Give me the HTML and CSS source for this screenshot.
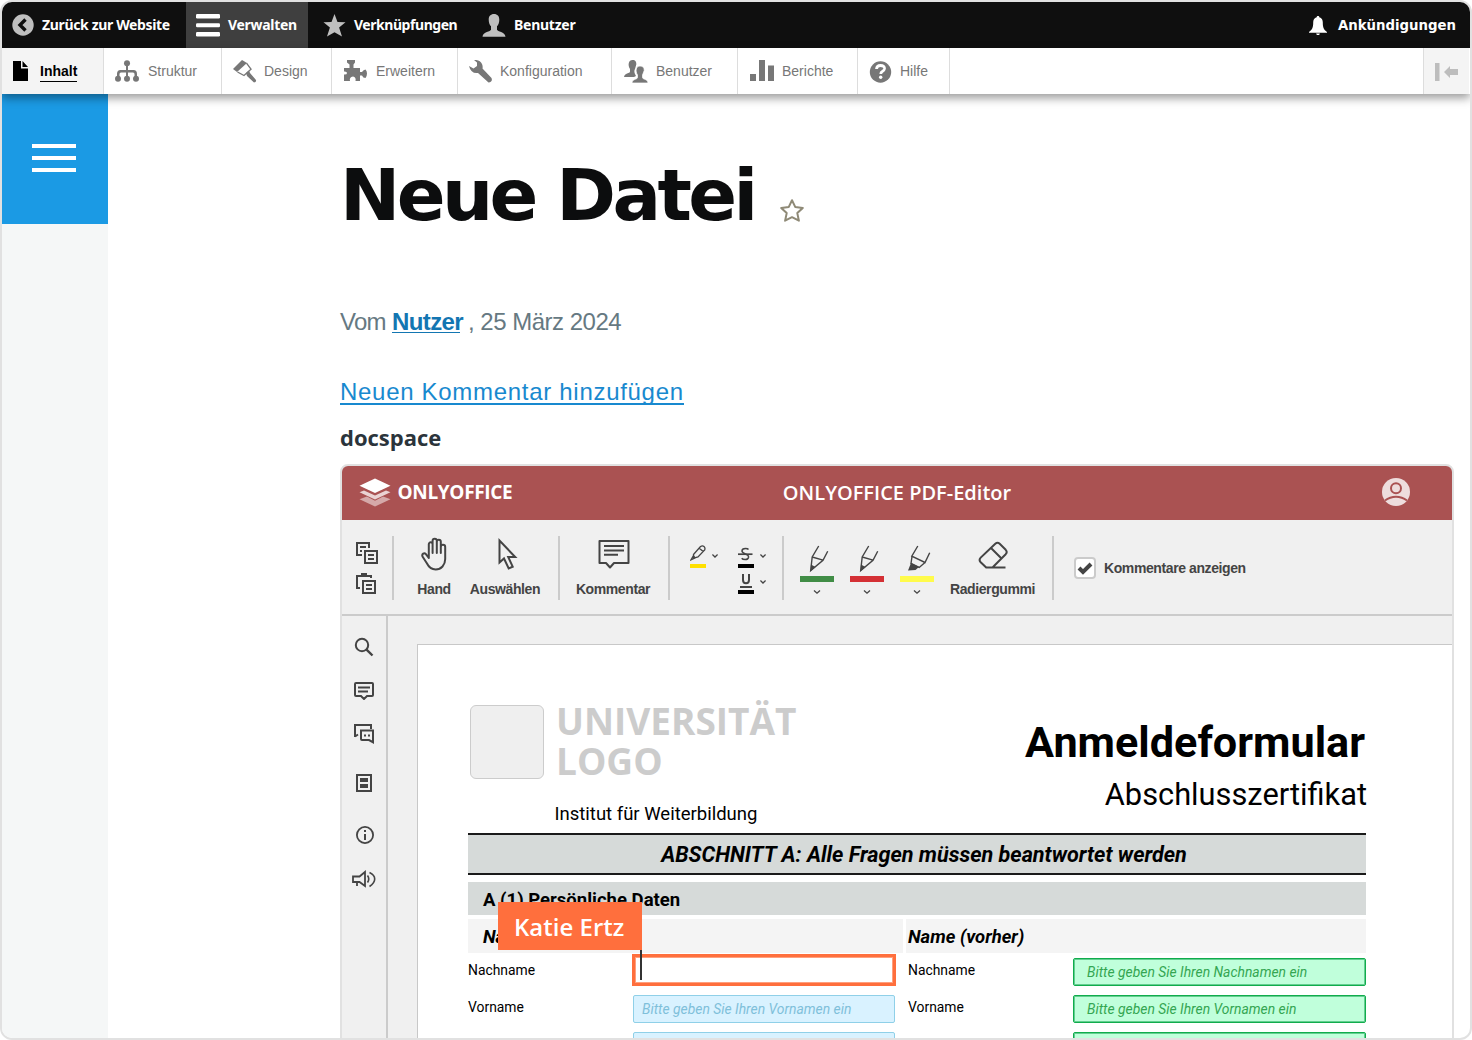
FILE: index.html
```html
<!DOCTYPE html>
<html lang="de">
<head>
<meta charset="utf-8">
<title>Neue Datei</title>
<link rel="stylesheet" href="styles.css">
</head>
<body>
<div class="frame">
  <nav class="admin">
    <a class="admin-item admin-back"><svg class="ico-back" width="22" height="22" viewBox="0 0 22 22"><circle cx="11" cy="11" r="10.700" fill="#bfbfbf"/><path d="M13.500 5.500L8 11l5.500 5.500" fill="none" stroke="#0f0f0f" stroke-width="3.400"/></svg><span class="t-back">Zurück zur Website</span></a>
    <a class="admin-item admin-manage"><svg width="24" height="23" viewBox="0 0 24 23" fill="#fff"><rect width="24" height="4.500" rx="1.200"/><rect y="9.300" width="24" height="4" rx="1.200"/><rect y="18" width="24" height="4.500" rx="1.200"/></svg><span class="t-manage">Verwalten</span></a>
    <a class="admin-item admin-star"><svg width="24" height="23" viewBox="0 0 24 23"><path d="M12.500 0l3 8 8 .2-6.400 5.200 2.900 9.100-7.500-4.200L5 22.500l2.900-9.100L1.500 8.200l8-.2z" fill="#bfbfbf"/></svg><span class="t-star">Verknüpfungen</span></a>
    <a class="admin-item admin-user"><svg width="24" height="23" viewBox="0 0 24 23"><path d="M12 0c3.400 0 5.300 2.200 5.300 5.700 0 3-1 5.300-2.300 6.500v3.600c.3 1.800 8 2 8.500 7H.5c.5-5 8.200-5.200 8.500-7v-3.600C7.700 11 6.700 8.700 6.700 5.700 6.700 2.200 8.600 0 12 0z" fill="#bfbfbf"/></svg><span class="t-user">Benutzer</span></a>
    <a class="admin-item admin-news"><svg width="20" height="21" viewBox="0 0 20 21"><path d="M10 1c.9 0 1.300.6 1.300 1.200 2.600.7 3.500 2.800 3.500 5.300 0 5 .9 7 4.200 9.500v.8H1V17c3.300-2.500 4.200-4.500 4.200-9.500 0-2.500.9-4.600 3.500-5.300C8.700 1.600 9.100 1 10 1zM8.200 18.500h3.600c0 2-3.600 2-3.600 0z" fill="#fff"/></svg><span class="t-news">Ankündigungen</span></a>
  </nav>

  <nav class="tabs">
    <a class="tab w102 is-active"><svg class="ico-page" width="18" height="22" viewBox="0 0 18 22"><path d="M1 1h8v7.500h7V21H1zM10.500 1L16 7h-5.500z" fill="#000"/></svg><span>Inhalt</span></a>
    <a class="tab w118"><svg width="24" height="24" viewBox="0 0 24 24" fill="#777"><circle cx="12" cy="3.200" r="3"/><path d="M11 5h2v15h-2zM2 19v-5q0-4 3.500-4h13Q22 10 22 14v5h-2.500v-5q0-1.500-1.500-1.500H6Q4.500 12.500 4.500 14v5z"/><circle cx="3" cy="18.700" r="3"/><circle cx="12" cy="18.700" r="3"/><circle cx="21" cy="18.700" r="3"/></svg><span>Struktur</span></a>
    <a class="tab tight w110"><svg width="24" height="24" viewBox="0 0 24 24"><path d="M9 0L0 9l4 3L14 3z" fill="#777"/><path d="M13.500 3.200l4.500 6L11 15.500 4.500 12" fill="none" stroke="#777" stroke-width="1.400"/><path d="M13 13l3-2.500 1 2.500 6 7q.5 2-2 2.500L14 16z" fill="#777"/></svg><span>Design</span></a>
    <a class="tab w126"><svg width="24" height="24" viewBox="0 0 24 24"><path d="M4 0h8v2.500l-1.500 2V8H17v4h2q1.500-2.500 3.500-2.500 1.500 1.500 1.500 4T22.500 18Q20 18 19 15.500h-2V21h-4.500q.8-4-2.500-4.500-4 .5-3 4.500H1v-6.500q3 .3 3-1.500t-3-1.500V8h5.500V4.500L4 2.500z" fill="#777"/></svg><span>Erweitern</span></a>
    <a class="tab tight w154"><svg width="24" height="24" viewBox="0 0 24 24"><path d="M5 0q6-.5 8 4 1 2 .5 4.500L22.500 18q1.500 4-3 4.500L9 13Q2 14 0 6l4.500 2.500L8 6V2.500z" fill="#777"/></svg><span>Konfiguration</span></a>
    <a class="tab shift w126"><svg width="24" height="24" viewBox="0 0 24 24" fill="#777"><path d="M8.500 0c3 0 4 2 3.800 4.500L11 9c-1 1.500-1 4 1 7l-2 1H0c.5-4 6-3.500 6-5.500V9C3.500 5 4.500 0 8.500 0z"/><path d="M16 6c3 0 4.500 2 4.200 4.500L18.500 15v2.500c0 2 5.500 1.500 5.500 5.500H8c0-4 5.500-3.500 5.500-5.500V15C11 11 12 6 16 6z" stroke="#fff" stroke-width=".7"/></svg><span>Benutzer</span></a>
    <a class="tab shift w120"><svg width="24" height="24" viewBox="0 0 24 24" fill="#777"><path d="M0 14h6v7H0zM9 0h6v21H9zM18 5.500h6V21h-6z"/></svg><span>Berichte</span></a>
    <a class="tab tight w92"><svg width="24" height="24" viewBox="0 0 24 24"><circle cx="11.500" cy="12" r="10.700" fill="#777"/><path d="M7.500 9q.3-3.500 4-3.500 4.200 0 4 3.200-.2 1.800-2.200 2.800-1.500.8-1.500 2.500" fill="none" stroke="#fff" stroke-width="2.800"/><circle cx="11.700" cy="17.300" r="1.700" fill="#fff"/></svg><span>Hilfe</span></a>
    <a class="tab-toggle"><svg width="24" height="20" viewBox="0 0 24 20" fill="#bdbdbd"><path d="M0 1h4.500v18H0zM9 10L15 4V7h8v6h-8v3z"/></svg></a>
  </nav>

  <div class="body">
    <aside class="side"><button class="burger"><i></i><i></i><i></i></button></aside>
    <main class="main">
      <h1 class="title"><span>Neue Datei</span><svg width="26" height="26" viewBox="0 0 26 26"><path d="M13 2.200l3.200 6.700 7.600 1-5.500 5.200 1.600 7.600L13 19.200l-6.900 3.500 1.600-7.600L2.200 9.900l7.600-1z" fill="none" stroke="#8f8a77" stroke-width="2" stroke-linejoin="round"/></svg></h1>
      <p class="meta"><span class="by">Vom </span><a class="author">Nutzer</a><span class="date">, 25 März 2024</span></p>
      <p class="reply"><a>Neuen Kommentar hinzufügen</a></p>
      <h2 class="field-name">docspace</h2>

      <section class="editor">
        <header class="ed-head">
          <div class="brand"><svg width="32" height="29" viewBox="0 0 32 29" fill="#fff"><path d="M16 15.500L.5 21.200 16 28.500l15.500-7.300z" opacity=".5"/><path d="M16 9L.5 14.500 16 22.800l15.500-8.300z" fill="#aa5252"/><path d="M.5 14.200L5 12.600l11 5 11-5 4.500 1.600L16 21.500z" opacity=".75"/><path d="M16 .5L.5 7.700 16 15l15.500-7.300z"/></svg><span>ONLYOFFICE</span></div>
          <div class="ed-title">ONLYOFFICE PDF-Editor</div>
          <svg class="avatar" width="28" height="28" viewBox="0 0 28 28"><circle cx="14" cy="14" r="14" fill="#eedddd"/><circle cx="14" cy="10.200" r="5" fill="none" stroke="#aa5252" stroke-width="2"/><path d="M3 22.500Q8 18.700 14 18.700t11 3.800" fill="none" stroke="#aa5252" stroke-width="2"/></svg>
        </header>

        <div class="toolbar">
          <div class="grp g-clip">
            <svg width="22" height="22" viewBox="0 0 22 22" class="line"><path d="M6 13H1V1h12v5M4 5h6M4 9h2"/><path d="M9 9h12v12H9zM12 13h6M12 17h6"/></svg>
            <svg width="22" height="22" viewBox="0 0 22 22" class="line"><path d="M4 16H1V4h14v2M6 3V2h4v1"/><path d="M7 9h12v12H7zM10 13h6M10 17h6"/></svg>
          </div>
          <div class="grp g-select">
            <div class="tool hand"><svg width="26" height="34" viewBox="0 0 26 34" class="line"><path stroke-linecap="round" stroke-linejoin="round" d="M7.800 21V7.200a1.900 1.900 0 0 1 3.800 0V16M11.600 8V3.800a2.100 2.100 0 0 1 4.200 0V16M15.800 4.800a2 2 0 0 1 4 0V16M19.800 10a2.200 2.200 0 0 1 4.400 0V22c0 6-4 10.500-9.500 10.500-5 0-7-2.500-9-6.500L1.500 19.500c-1-2.600 1.700-4.300 3.400-2.300L7.800 21"/></svg><span>Hand</span></div>
            <div class="tool pick"><svg width="24" height="34" viewBox="0 0 24 34" class="line"><path d="M4.500 4.500v22l4.500-4 4.700 10 4-1.800-4.500-9.700h7z"/></svg><span>Auswählen</span></div>
          </div>
          <div class="grp g-comment">
            <div class="tool"><svg width="34" height="34" viewBox="0 0 34 34" class="line"><path d="M2.500 5h29v22H17l-4 4.500L9 27H2.500zM7 10h20M7 14.400h20M7 18.700h14" stroke-linejoin="round"/></svg><span>Kommentar</span></div>
          </div>
          <div class="grp g-text">
            <div class="mini"><svg width="16" height="24" viewBox="0 0 16 24"><path d="M3.500 10.500L10.500 2.500q2-1.300 3.500 0t.7 3.500L8 13l-4.500 1.200zM9 4l4.200 3.500M1 15.800l2.500-4.300L5 14z" fill="none" stroke="#444" stroke-width="1.300"/><path d="M0 20h16v4H0z" fill="#ffe000"/></svg><svg class="chev" width="6" height="4" viewBox="0 0 6 4"><path d="M.4.5L3 3 5.600.5"/></svg></div>
            <div class="mini-col">
              <div class="mini"><svg width="16" height="24" viewBox="0 0 16 24"><path d="M10.500 5.500Q9.800 4.500 7.500 4.500 4 4.500 4 7q0 1.500 3 2.700 4 1.400 3.500 3.800-.5 2-3.300 2-2.500 0-3.500-1.300" fill="none" stroke="#444" stroke-width="1.500"/><path d="M0 10.200h14.500" stroke="#444" stroke-width="1.700"/><path d="M0 20h16v4H0z" fill="#000"/></svg><svg class="chev" width="6" height="4" viewBox="0 0 6 4"><path d="M.4.5L3 3 5.600.5"/></svg></div>
              <div class="mini"><svg width="16" height="24" viewBox="0 0 16 24"><path d="M5 4v6q0 3.200 3 3.200t3-3.200V4" fill="none" stroke="#444" stroke-width="2"/><path d="M2 17h12" stroke="#444" stroke-width="2"/><path d="M0 20h16v4H0z" fill="#000"/></svg><svg class="chev" width="6" height="4" viewBox="0 0 6 4"><path d="M.4.5L3 3 5.600.5"/></svg></div>
            </div>
          </div>
          <div class="grp g-pens">
            <svg class="pen" width="34" height="50" viewBox="0 0 34 50"><path d="M18.700 1l-6.500 11-1.500 13.500L23 15.200l4.700-9M12.200 12L23 15.200" fill="none" stroke="#444" stroke-width="1.400"/><path d="M11 19.500l4.500 2.500-5 4.300z" fill="#444"/><path d="M0 31h34v6H0z" fill="#418d46"/><path d="M14 45.500l3 2.700 3-2.700" fill="none" stroke="#444" stroke-width="1.300"/></svg>
            <svg class="pen" width="34" height="50" viewBox="0 0 34 50"><path d="M18.700 1l-6.500 11-1.500 13.500L23 15.200l4.700-9M12.200 12L23 15.200" fill="none" stroke="#444" stroke-width="1.400"/><path d="M11 19.500l4.500 2.500-5 4.300z" fill="#444"/><path d="M0 31h34v6H0z" fill="#d43035"/><path d="M14 45.500l3 2.700 3-2.700" fill="none" stroke="#444" stroke-width="1.300"/></svg>
            <svg class="pen" width="34" height="50" viewBox="0 0 34 50"><path d="M17.800 1l-6 10.200L25 17.500l4.700-9.800M12 11.500L11 18.500l8.200 4L25 17.500" fill="none" stroke="#444" stroke-width="1.400"/><path d="M11 18l8 4-3.500 3L8 25.500z" fill="#444"/><path d="M0 31h34v6H0z" fill="#fffb4b"/><path d="M14 45.500l3 2.700 3-2.700" fill="none" stroke="#444" stroke-width="1.300"/></svg>
            <div class="tool eraser"><svg width="30" height="34" viewBox="0 0 30 34" class="line"><path d="M17.300 7.800q2.200-2 4.400 0l6 6q2 2.200 0 4.400L14.500 31.500H8.200l-5.500-5.300q-2.200-2.300 0-4.600zM13 12l10.500 10.500M8 31.600h19.500"/></svg><span>Radiergummi</span></div>
          </div>
          <div class="grp g-check">
            <span class="check"><svg width="16" height="14" viewBox="0 0 16 14"><path d="M2 7l4 4L14 3" fill="none" stroke="#444" stroke-width="4"/></svg></span>
            <span class="check-label">Kommentare anzeigen</span>
          </div>
        </div>

        <div class="ed-body">
          <div class="rail">
            <svg class="line r1" width="20" height="20" viewBox="0 0 20 20"><circle cx="8" cy="8" r="6.200"/><path d="M12.300 12.300L18.500 18.500" stroke-width="2.400"/></svg>
            <svg class="line r2" width="20" height="18" viewBox="0 0 20 18"><path d="M2 1h16q1 0 1 1v11q0 1-1 1h-5l-3 3-3-3H2q-1 0-1-1V2q0-1 1-1zM4 5.500h12M4 9.500h10" /></svg>
            <svg class="line r3" width="20" height="20" viewBox="0 0 20 20"><path d="M1 13V1h16v4M1 12.500L4 10.500M7 6.500h12v11.700l-4-2.200H8q-1 0-1-1z"/><path d="M10 11.500h2M14 11.500h2"/></svg>
            <svg class="line r4" width="16" height="18" viewBox="0 0 16 18"><path d="M1 1h14v16H1z"/><path d="M4 4h8v4H4zM4 10h8v4H4z" fill="#444" stroke="none"/></svg>
            <svg class="line r5" width="18" height="18" viewBox="0 0 18 18"><circle cx="9" cy="9" r="8.100" stroke-width="1.800"/><path d="M9 8v6M9 4v2"/></svg>
            <svg class="line r6" width="24" height="18" viewBox="0 0 24 18"><path d="M1 6.500h6.500L13 2v14L7.500 12H1zM5 12v4" stroke-width="1.800"/><path d="M15.500 5.500q2.500 3.500 0 7M17.500 2.500Q22.700 5 22.700 9t-5.200 7.500" stroke-width="1.600"/></svg>
          </div>
          <div class="canvas">
            <article class="paper">
              <div class="doc-head">
                <div>
                  <div class="uni"><span class="uni-logo"></span><span class="uni-name">UNIVERSITÄT<br>LOGO</span></div>
                  <div class="inst">Institut für Weiterbildung</div>
                </div>
                <div class="doc-titles">
                  <div class="doc-title">Anmeldeformular</div>
                  <div class="doc-sub">Abschlusszertifikat</div>
                </div>
              </div>
              <div class="section">ABSCHNITT A: Alle Fragen müssen beantwortet werden</div>
              <div class="subsection">A (1) Persönliche Daten</div>
              <div class="names"><div>Name</div><div>Name (vorher)</div></div>
              <div class="form">
                <label>Nachname</label><div class="inp focus"></div><label class="c3">Nachname</label><div class="inp green">Bitte geben Sie Ihren Nachnamen ein</div>
                <label>Vorname</label><div class="inp blue">Bitte geben Sie Ihren Vornamen ein</div><label class="c3">Vorname</label><div class="inp green">Bitte geben Sie Ihren Vornamen ein</div>
                <label></label><div class="inp blue"></div><label class="c3"></label><div class="inp green"></div>
              </div>
              <div class="peer">Katie Ertz</div>
            </article>
          </div>
        </div>
      </section>
    </main>
  </div>
</div>
</body>
</html>
```
FILE: styles.css
```css
* { box-sizing: border-box; }
body { margin: 0; background: #fff; font-family: "Liberation Sans", Arial, sans-serif; }
svg { display: block; flex: none; }
h1, h2, p { margin: 0; }
span, a { white-space: nowrap; }

.frame { width: 1472px; height: 1040px; border: 2px solid #e1e1e1; border-radius: 12px; overflow: hidden; display: flex; flex-direction: column; background: #fff; }

/* admin bar */
.admin { height: 46px; flex: none; background: #0f0f0f; display: flex; color: #fff; font: bold 14px/46px "Noto Sans", sans-serif; }
.admin-item { display: flex; align-items: center; height: 46px; }
.admin-item span { margin-left: 8px; }
.admin-back { width: 184px; padding-left: 10px; }
.admin-manage { width: 122px; padding-left: 10px; background: #3f3f3f; }
.admin-star { width: 174px; padding-left: 14px; }
.t-back { letter-spacing: -.35px; }
.t-manage { letter-spacing: -.3px; }
.t-star { letter-spacing: -.45px; }
.t-user { letter-spacing: -.25px; }
.admin-news { margin-left: auto; padding-right: 14px; }
.admin-item .t-news { margin-left: 10px; padding-top: 1px; font: bold 13.300px/46px "DejaVu Sans", sans-serif; }

/* section tabs */
.tabs { height: 46px; flex: none; display: flex; background: #fff; position: relative; z-index: 2; box-shadow: 0 4px 9px rgba(0,0,0,.4); color: #777; font-size: 14px; line-height: 46px; }
.tab { display: flex; align-items: center; padding-left: 11px; border-right: 1px solid #ddd; }
.tab svg { margin-top: 2px; }
.tab .ico-page { margin-top: 0; }
.tab span { margin-left: 9px; }
.tab.tight span { margin-left: 7px; }
.tab.shift { padding-left: 12px; }
.tab.shift span { margin-left: 8px; }
.w102 { width: 102px; } .w118 { width: 118px; } .w110 { width: 110px; } .w126 { width: 126px; }
.w154 { width: 154px; } .w120 { width: 120px; } .w92 { width: 92px; }
.tab.is-active { background: #f4f4f4; color: #000; font-weight: bold; padding-left: 10px; }
.tab.is-active span { margin-left: 10px; line-height: 20px; border-bottom: 1px solid #000; }
.tab-toggle { margin-left: auto; width: 46px; margin-right: 1px; border-left: 1px solid #ddd; background: #f4f4f4; display: flex; align-items: center; padding: 2px 0 0 11px; }

.body { flex: 1; display: flex; min-height: 0; }
.side { width: 106px; flex: none; background: #f5f7f7; }
.burger { width: 106px; height: 130px; border: 0; padding: 0 2px 2px 0; background: #1b9ae4; display: flex; flex-direction: column; gap: 8px; align-items: center; justify-content: center; }
.burger i { width: 44px; height: 4px; background: #fff; }

.main { flex: 1; padding: 59px 16px 0 232px; min-width: 0; }
.title { height: 84px; display: flex; font: bold 72px/84px "DejaVu Sans", sans-serif; letter-spacing: -3.600px; color: #0c0d0e; }
.title svg { margin: 45px 0 0 24px; }
.meta { margin-top: 71px; height: 28px; font-size: 24px; line-height: 28px; color: #667982; display: flex; }
.by { width: 52px; letter-spacing: -.8px; }
.author { width: 76px; font-weight: bold; color: #1376b2; letter-spacing: -.6px; background: linear-gradient(#1376b2, #1376b2) 0 24px / 68px 1px no-repeat; }
.date { letter-spacing: -.5px; }
.reply { margin-top: 42px; height: 28px; font-size: 24px; line-height: 28px; color: #1889cf; letter-spacing: .7px; }
.reply a { display: inline-block; height: 27px; border-bottom: 2px solid #1889cf; }
.field-name { margin-top: 16px; height: 30px; font: bold 22px/30px "Open Sans", sans-serif; color: #2b343b; }

/* editor */
.editor { margin-top: 12px; width: 1114px; height: 600px; border: 2px solid #e1e1e1; border-radius: 8px 8px 0 0; overflow: hidden; background: #f0f0f0; display: flex; flex-direction: column; }
.ed-head { height: 54px; flex: none; background: #aa5252; color: #fff; display: grid; grid-template-columns: 1fr auto 1fr; align-items: center; }
.brand { display: flex; align-items: center; padding: 0 0 2px 17px; font: bold 19px/28px "Open Sans", sans-serif; }
.brand span { margin-left: 6.500px; letter-spacing: -.33px; }
.ed-title { font: 600 20px/28px "Open Sans", sans-serif; }
.avatar { justify-self: end; margin: 0 42px 2px 0; }

.toolbar { height: 96px; flex: none; border-bottom: 2px solid #cbcbcb; padding-top: 16px; display: flex; align-items: flex-start; color: #444; font: bold 14px/16px "Liberation Sans", Arial, sans-serif; letter-spacing: -.4px; }
.grp { height: 64px; display: flex; border-right: 2px solid #cbcbcb; }
.line { fill: none; stroke: #444; stroke-width: 2; }
.g-clip { width: 52px; flex-direction: column; gap: 8px; padding: 6px 0 0 14px; }
.g-select { width: 166px; padding-left: 23px; gap: 19px; }
.tool { display: flex; flex-direction: column; align-items: center; }
.tool span { margin-top: 11px; }
.hand { width: 34px; } .hand svg { margin-top: 1px; margin-bottom: -1px; }
.pick { width: 70px; } .pick svg { margin-left: 3px; }
.g-comment { width: 110px; justify-content: center; padding-right: 2px; }
.g-comment svg { margin-left: 2px; }
.g-text { width: 114px; padding: 8px 0 0 20px; gap: 20px; }
.mini { display: flex; gap: 6px; height: 24px; }
.mini-col { display: flex; flex-direction: column; gap: 2px; }
.chev { margin-top: 10px; fill: none; stroke: #444; stroke-width: 1.300; }
.g-pens { width: 270px; padding-left: 16px; gap: 16px; }
.pen { margin-top: 9px; }
.eraser { width: 85px; }
.g-check { border: 0; align-items: center; padding-left: 20px; gap: 8px; }
.check { width: 22px; height: 22px; border: 2px solid #cbcbcb; border-radius: 4px; background: #fff; display: flex; align-items: center; justify-content: center; }

.ed-body { flex: 1; display: flex; min-height: 0; }
.rail { width: 46px; flex: none; border-right: 2px solid #cbcbcb; display: flex; flex-direction: column; align-items: center; padding-top: 21px; }
.r2 { margin-top: 25px; } .r3 { margin-top: 24px; } .r4 { margin-top: 30px; }
.r5 { margin: 34px 0 0 2px; } .r6 { margin-top: 26px; }
.canvas { flex: 1; padding: 28px 0 0 29px; min-width: 0; }
.paper { position: relative; height: 500px; background: #fff; border: 1px solid #c8c8c8; border-right: 0; padding: 54px 0 0 50px; font-family: Roboto, sans-serif; color: #000; }
.doc-head { width: 898px; height: 134px; display: flex; justify-content: space-between; }
.uni { display: flex; height: 80px; }
.uni-logo { width: 74px; height: 74px; margin: 6px 12.500px 0 1.500px; border: 1.500px solid #ccc; border-radius: 6px; background: #efefef; }
.uni-name { padding-top: 2px; font: bold 37px/40px "Open Sans", sans-serif; color: #ccc; }
.inst { margin: 23px 0 0 86.500px; font-size: 18.500px; line-height: 24px; }
.doc-titles { padding-top: 19px; text-align: right; }
.doc-title { font-size: 43.200px; line-height: 50px; font-weight: bold; padding-right: 1px; }
.doc-sub { margin: 6px -1px 0 0; font-size: 30.800px; line-height: 41px; }
.section { width: 898px; height: 42px; border: solid #1a1a1a; border-width: 2px 0; background: #d6dad9; text-align: center; font: italic bold 21.600px/39px Roboto, sans-serif; padding-left: 14px; }
.subsection { width: 898px; height: 33px; margin-top: 7px; background: #d6dad9; padding-left: 15px; font: bold 18.530px/36px Roboto, sans-serif; }
.names { display: grid; grid-template-columns: 435px 460px; gap: 3px; width: 898px; margin-top: 4px; font: italic bold 18.450px/36px Roboto, sans-serif; }
.names div { height: 34px; background: #f4f4f4; padding-left: 15px; }
.names div + div { padding-left: 2px; }
.form { width: 898px; display: grid; grid-template-columns: 165px 262px 178px 293px; grid-auto-rows: 37px; font-size: 13.880px; line-height: 28px; }
.form label { padding-top: 3px; }
.form .c3 { padding-left: 13px; }
.inp { height: 28px; margin-top: 5px; border: 1.500px solid; border-radius: 2px; font-style: italic; line-height: 26px; }
.blue { background: #d9f2ff; border-color: #8fd0e8; color: #7fc0da; padding-left: 8px; }
.green { background: #c0ffdb; border-color: #10ac4c; box-shadow: inset 0 0 0 1px #63cf90; color: #34a652; padding-left: 13px; }
.inp.focus { height: 32px; margin: 1px -1px 0; border: 3px solid #ff6f3d; border-radius: 0; box-shadow: inset 0 0 0 1px #ffa07e; }
/* collaborator's cursor flag */
.peer { position: absolute; left: 80px; top: 257px; width: 144px; height: 48px; background: #ff6f3d; color: #fff; font: 600 24px/50px "Open Sans", sans-serif; padding-left: 16px; white-space: nowrap; }
.peer::after { content: ""; position: absolute; right: 0; top: 48px; width: 2px; height: 30px; background: #333; }
```
